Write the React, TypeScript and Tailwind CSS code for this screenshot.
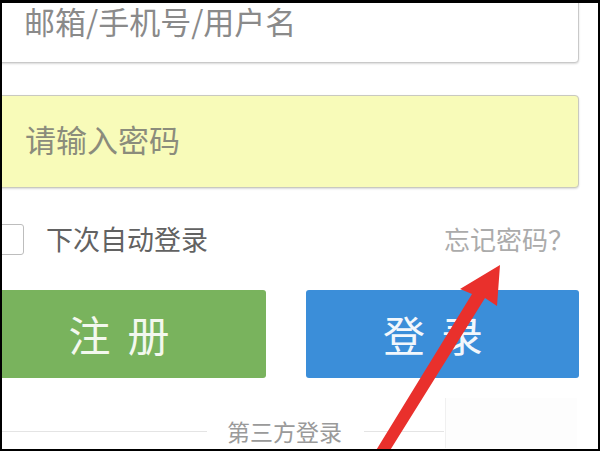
import React from "react";

const font = { fontFamily: '"Noto Sans CJK SC", "Noto Sans", sans-serif' };

export default function App() {
  return (
    <div className="relative w-[600px] h-[451px] bg-black pt-[3px] pl-[2px] pr-[2px] pb-[2px]" style={font}>
      <div className="relative w-full h-full bg-white overflow-hidden">
        <div className="flex flex-col ml-[-22px] mr-[19px] mt-[-33px]">
          {/* username */}
          <div className="h-[93px] border border-[#c9c9c9] rounded-[4px] bg-white shadow-[0_1px_2px_rgba(0,0,0,0.15)] pl-[43px] pt-[34px]">
            <span className="block text-[31px] leading-[31px] text-[#8a8a8a]">邮箱/手机号/用户名</span>
          </div>
          {/* password */}
          <div className="mt-[32px] h-[93px] border border-[#c9c9c0] rounded-[4px] bg-[#f8fbb9] shadow-[0_1px_2px_rgba(0,0,0,0.15)] pl-[44px] pb-[6px] flex items-center">
            <span className="text-[31px] leading-[31px] text-[#8b8c7c]">请输入密码</span>
          </div>
          {/* remember row */}
          <div className="h-[102px] flex items-center">
            <div className="w-[31px] h-[31px] ml-[13px] border border-[#bdbdbd] rounded-[3px] bg-white" />
            <span className="ml-[22px] text-[27px] leading-[30px] text-[#626262]">下次自动登录</span>
            <span className="ml-auto mr-[5px] text-[26px] leading-[30px] text-[#ababab]">忘记密码？</span>
          </div>
          {/* buttons */}
          <div className="h-[88px] flex gap-[40px]">
            <div className="w-[286px] h-full rounded-[3px] bg-[#79b35d] flex items-center justify-center pl-[20px]">
              <div className="flex gap-[17px] text-[42px] leading-[46px] text-[#f3f8ee] pr-[28px]">
                <span>注</span>
                <span>册</span>
              </div>
            </div>
            <div className="flex-1 h-full rounded-[3px] bg-[#3b8ed9] flex items-center justify-center">
              <div className="flex gap-[16px] text-[42px] leading-[46px] text-[#f2f7fc] pr-[19px]">
                <span>登</span>
                <span>录</span>
              </div>
            </div>
          </div>
          {/* divider */}
          <div className="mt-[41px] h-[24px] flex items-center">
            <div className="w-[227px] h-px bg-[#e4e4e4]" />
            <span className="ml-[20px] text-[23px] leading-[24px] text-[#9a9a9a]">第三方登录</span>
            <div className="ml-[22px] w-[80px] h-px bg-[#e4e4e4]" />
          </div>
        </div>
        {/* blurred watermark */}
        <div className="absolute left-[443px] top-[395px] w-[132px] h-[50px] border-l border-[#f0f0f0] bg-[#fdfdfd]" />
      </div>
      <svg className="absolute inset-0 pointer-events-none" width="600" height="451" viewBox="0 0 600 451">
        <polygon
          points="375,452 472,294 460,289 500,265 497,306 485,298 389,452"
          fill="#e9302c"
        />
      </svg>
      <div className="absolute left-0 right-0 bottom-0 h-[2px] bg-black" />
    </div>
  );
}
